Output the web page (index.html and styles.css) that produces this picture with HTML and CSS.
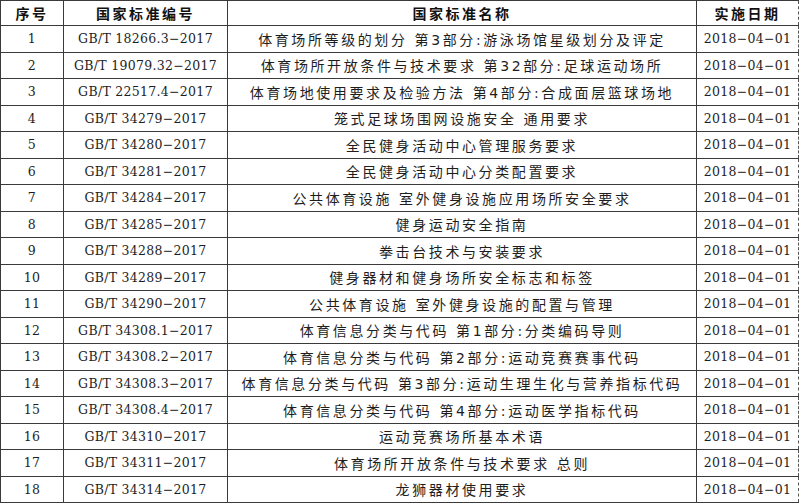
FILE: index.html
```html
<!DOCTYPE html>
<html lang="zh">
<head>
<meta charset="utf-8">
<link rel="stylesheet" href="styles.css">
</head>
<body>
<table class="std">
  <colgroup>
    <col class="c-no"><col class="c-code"><col class="c-name"><col class="c-date">
  </colgroup>
  <thead>
    <tr><th>序号</th><th>国家标准编号</th><th>国家标准名称</th><th class="last">实施日期</th></tr>
  </thead>
  <tbody>
    <tr><td class="num">1</td><td class="code">GB/T 18266.3−2017</td><td class="name">体育场所等级的划分 第3部分:游泳场馆星级划分及评定</td><td class="date last">2018−04−01</td></tr>
    <tr><td class="num">2</td><td class="code">GB/T 19079.32−2017</td><td class="name">体育场所开放条件与技术要求 第32部分:足球运动场所</td><td class="date last">2018−04−01</td></tr>
    <tr><td class="num">3</td><td class="code">GB/T 22517.4−2017</td><td class="name">体育场地使用要求及检验方法 第4部分:合成面层篮球场地</td><td class="date last">2018−04−01</td></tr>
    <tr><td class="num">4</td><td class="code">GB/T 34279−2017</td><td class="name">笼式足球场围网设施安全 通用要求</td><td class="date last">2018−04−01</td></tr>
    <tr><td class="num">5</td><td class="code">GB/T 34280−2017</td><td class="name">全民健身活动中心管理服务要求</td><td class="date last">2018−04−01</td></tr>
    <tr><td class="num">6</td><td class="code">GB/T 34281−2017</td><td class="name">全民健身活动中心分类配置要求</td><td class="date last">2018−04−01</td></tr>
    <tr><td class="num">7</td><td class="code">GB/T 34284−2017</td><td class="name">公共体育设施 室外健身设施应用场所安全要求</td><td class="date last">2018−04−01</td></tr>
    <tr><td class="num">8</td><td class="code">GB/T 34285−2017</td><td class="name">健身运动安全指南</td><td class="date last">2018−04−01</td></tr>
    <tr><td class="num">9</td><td class="code">GB/T 34288−2017</td><td class="name">拳击台技术与安装要求</td><td class="date last">2018−04−01</td></tr>
    <tr><td class="num">10</td><td class="code">GB/T 34289−2017</td><td class="name">健身器材和健身场所安全标志和标签</td><td class="date last">2018−04−01</td></tr>
    <tr><td class="num">11</td><td class="code">GB/T 34290−2017</td><td class="name">公共体育设施 室外健身设施的配置与管理</td><td class="date last">2018−04−01</td></tr>
    <tr><td class="num">12</td><td class="code">GB/T 34308.1−2017</td><td class="name">体育信息分类与代码 第1部分:分类编码导则</td><td class="date last">2018−04−01</td></tr>
    <tr><td class="num">13</td><td class="code">GB/T 34308.2−2017</td><td class="name">体育信息分类与代码 第2部分:运动竞赛赛事代码</td><td class="date last">2018−04−01</td></tr>
    <tr><td class="num">14</td><td class="code">GB/T 34308.3−2017</td><td class="name">体育信息分类与代码 第3部分:运动生理生化与营养指标代码</td><td class="date last">2018−04−01</td></tr>
    <tr><td class="num">15</td><td class="code">GB/T 34308.4−2017</td><td class="name">体育信息分类与代码 第4部分:运动医学指标代码</td><td class="date last">2018−04−01</td></tr>
    <tr><td class="num">16</td><td class="code">GB/T 34310−2017</td><td class="name">运动竞赛场所基本术语</td><td class="date last">2018−04−01</td></tr>
    <tr><td class="num">17</td><td class="code">GB/T 34311−2017</td><td class="name">体育场所开放条件与技术要求 总则</td><td class="date last">2018−04−01</td></tr>
    <tr><td class="num">18</td><td class="code">GB/T 34314−2017</td><td class="name">龙狮器材使用要求</td><td class="date last">2018−04−01</td></tr>
  </tbody>
</table>
</body>
</html>
```

FILE: styles.css
```css
html, body {
  margin: 0;
  padding: 0;
  background: #ffffff;
}

.std {
  width: 798px;
  border-collapse: collapse;
  table-layout: fixed;
  color: #1e1e1e;
  font-family: "DejaVu Serif", "Noto Sans CJK SC", serif;
}

.c-no { width: 63px; }
.c-code { width: 164px; }
.c-name { width: 469px; }
.c-date { width: 102px; }

.std th,
.std td {
  border: 1px solid #3a3a3a;
  padding: 0;
  text-align: center;
  vertical-align: middle;
  white-space: nowrap;
  overflow: hidden;
}

.std th {
  height: 24px;
  font-family: "Noto Sans CJK SC", sans-serif;
  font-weight: 700;
  font-size: 14px;
  letter-spacing: 2.5px;
  color: #111;
}

.std td {
  height: 25.5px;
  font-size: 12.5px;
}

.std .last {
  border-right: 1px dashed #555;
}

.std .name {
  font-family: "DejaVu Sans", "Noto Sans CJK SC", sans-serif;
  font-size: 14px;
  letter-spacing: 2.6px;
  font-weight: 400;
}

.std .code,
.std .date,
.std .num {
  letter-spacing: 0.3px;
}
```
